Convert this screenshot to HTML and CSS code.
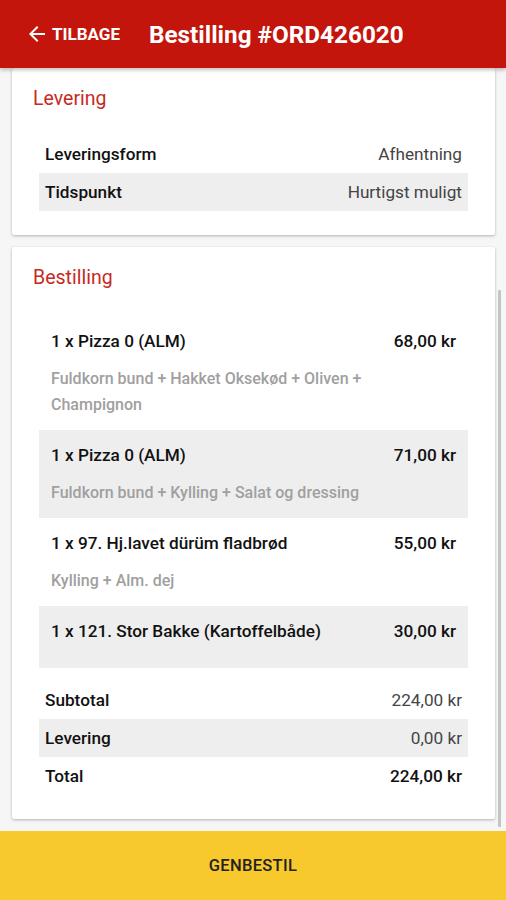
FILE: index.html
```html
<!DOCTYPE html>
<html lang="da">
<head>
<meta charset="utf-8">
<title>Bestilling #ORD426020</title>
<link rel="stylesheet" href="styles.css">
</head>
<body>
<div class="app">
  <header class="topbar">
    <button class="back">
      <svg class="back-icon" viewBox="0 0 24 24" width="24" height="24"><path d="M20 11H7.83l5.59-5.59L12 4l-8 8 8 8 1.41-1.41L7.83 13H20v-2z" fill="#fff"/></svg>
      <span>TILBAGE</span>
    </button>
    <h1 class="title">Bestilling #ORD426020</h1>
  </header>

  <main class="content">
    <section class="card">
      <h2 class="card-title">Levering</h2>
      <div class="info-row"><span class="label">Leveringsform</span><span class="value">Afhentning</span></div>
      <div class="info-row alt"><span class="label">Tidspunkt</span><span class="value">Hurtigst muligt</span></div>
    </section>

    <section class="card">
      <h2 class="card-title">Bestilling</h2>
      <div class="item">
        <div class="item-head"><span>1 x Pizza 0 (ALM)</span><span>68,00 kr</span></div>
        <div class="item-desc">Fuldkorn bund + Hakket Oksekød + Oliven + Champignon</div>
      </div>
      <div class="item alt">
        <div class="item-head"><span>1 x Pizza 0 (ALM)</span><span>71,00 kr</span></div>
        <div class="item-desc">Fuldkorn bund + Kylling + Salat og dressing</div>
      </div>
      <div class="item">
        <div class="item-head"><span>1 x 97. Hj.lavet dürüm fladbrød</span><span>55,00 kr</span></div>
        <div class="item-desc">Kylling + Alm. dej</div>
      </div>
      <div class="item alt">
        <div class="item-head"><span>1 x 121. Stor Bakke (Kartoffelbåde)</span><span>30,00 kr</span></div>
        <div class="item-desc"></div>
      </div>

      <div class="totals">
        <div class="info-row"><span class="label">Subtotal</span><span class="value">224,00 kr</span></div>
        <div class="info-row alt"><span class="label">Levering</span><span class="value">0,00 kr</span></div>
        <div class="info-row"><span class="label">Total</span><span class="value strong">224,00 kr</span></div>
      </div>
    </section>
    <div class="scrollbar"></div>
  </main>

  <footer class="reorder">GENBESTIL</footer>
</div>
</body>
</html>
```

FILE: styles.css
```css
* { box-sizing: border-box; margin: 0; padding: 0; }

html, body {
  width: 506px;
  height: 900px;
  overflow: hidden;
}

body {
  font-family: Roboto, "Noto Sans", Arial, sans-serif;
  background: #f6f6f6;
  color: #1a1a1a;
}

.app {
  display: flex;
  flex-direction: column;
  height: 900px;
}

.topbar {
  height: 68px;
  background: #c4150c;
  display: flex;
  align-items: center;
  padding-left: 25px;
  gap: 29px;
  box-shadow: 0 2px 4px rgba(0,0,0,0.25);
  position: relative;
  z-index: 2;
  flex-shrink: 0;
}

.back {
  display: flex;
  align-items: center;
  gap: 3px;
  background: none;
  border: none;
  color: #fff;
  font-family: Roboto, Arial, sans-serif;
  font-weight: 700;
  font-size: 17px;
}

.title {
  color: #fff;
  font-size: 24.3px;
  font-weight: 700;
}

.content {
  flex: 1;
  position: relative;
  overflow: hidden;
  padding: 0 11px 11px 12px;
  display: flex;
  flex-direction: column;
  gap: 12px;
}

.card {
  background: #fff;
  border-radius: 2px;
  box-shadow: 0 1px 3px rgba(0,0,0,0.28);
  padding: 20px 27px 24px 27px;
}

.card-title {
  font-size: 19.5px;
  line-height: 22px;
  font-weight: 400;
  color: #c62a22;
  margin: 0 0 25px -6px;
}

.card + .card .card-title { margin-bottom: 27px; }

.info-row {
  display: flex;
  justify-content: space-between;
  align-items: center;
  height: 38px;
  padding: 0 6px;
  font-size: 17.2px;
}

.alt { background: #eeeeee; }

.label {
  font-weight: 500;
  color: #111;
}

.value {
  color: #444;
  font-weight: 400;
}

.value.strong {
  font-weight: 500;
  color: #111;
}

.item {
  padding: 12px 12px;
}

.item-head {
  display: flex;
  justify-content: space-between;
  font-size: 17.2px;
  line-height: 26px;
  font-weight: 500;
  color: #111;
}

.item-desc {
  margin-top: 12px;
  font-size: 16px;
  line-height: 26px;
  font-weight: 500;
  color: #a0a0a0;
  padding-right: 60px;
}

.totals {
  margin-top: 13px;
}

.scrollbar {
  position: absolute;
  right: 5px;
  top: 222px;
  width: 3px;
  height: 537px;
  background: #c4c4c4;
  border-radius: 1px;
}

.reorder {
  height: 69px;
  flex-shrink: 0;
  background: #f8c92c;
  display: flex;
  align-items: center;
  justify-content: center;
  font-weight: 500;
  font-size: 16.5px;
  color: #222;
  letter-spacing: 0.3px;
}
```
